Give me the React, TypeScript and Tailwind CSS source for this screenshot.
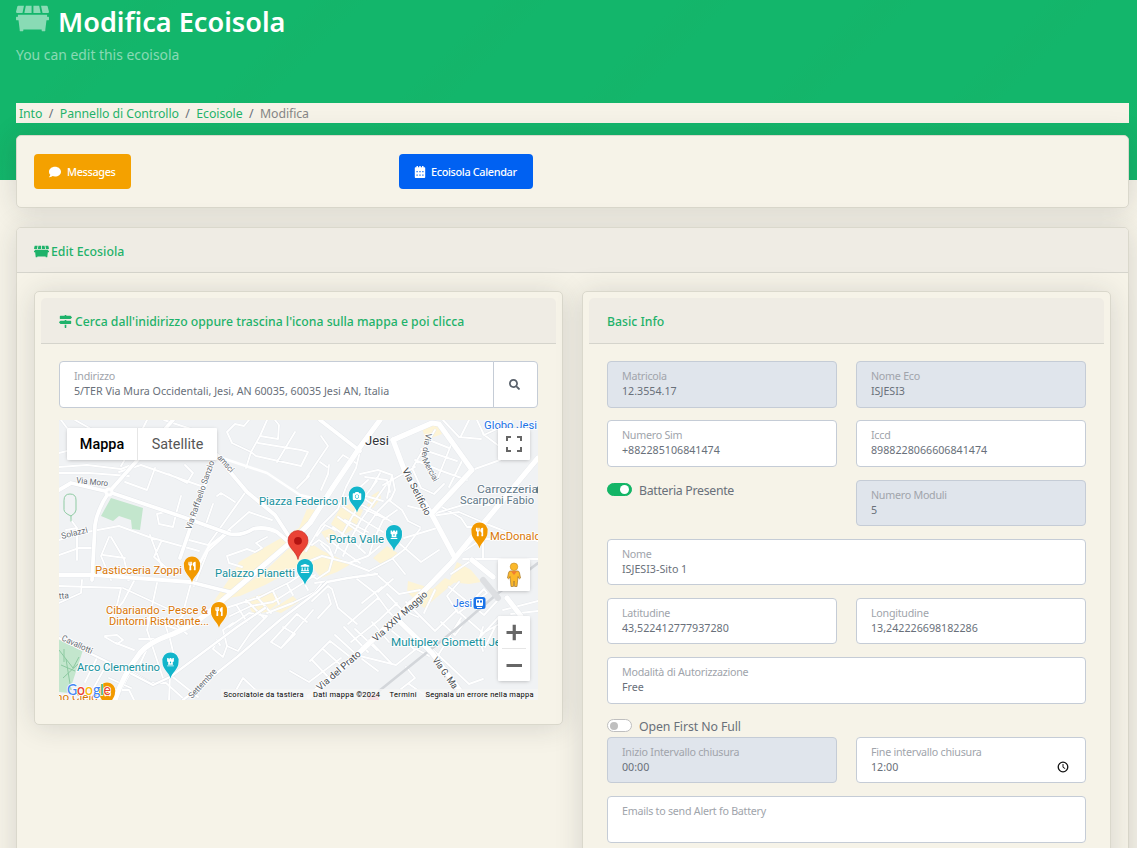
import { ReactNode } from "react";
import { FaDumpster, FaMapSigns, FaComment, FaSearch, FaUtensils, FaCamera, FaChessRook, FaLandmark } from "react-icons/fa";

const shadow = "shadow-[0_2px_28px_0_rgba(33,40,50,0.15)]";

function Field({ label, value, disabled, className = "", children }: { label: string; value?: string; disabled?: boolean; className?: string; children?: ReactNode }) {
  return (
    <div className={`flex items-center justify-between rounded-[4px] border border-[#c5ccd6] pl-[14px] pr-4 ${disabled ? "bg-[#e0e5ec]" : "bg-white"} ${className}`}>
      <div className="flex h-full flex-col pt-[7px]">
        <span className="h-[15px] whitespace-nowrap text-[10.7px] leading-[15px] tracking-[-0.25px] text-[#a0a4ab]">{label}</span>
        <span className="h-[15px] whitespace-nowrap text-[10.7px] leading-[15px] text-[#69707a]">{value}</span>
      </div>
      {children}
    </div>
  );
}

function Switch({ on, label, className }: { on?: boolean; label: string; className: string }) {
  return (
    <div className="flex items-start gap-[7px]">
      <span className={`mt-[2px] flex h-[13px] w-[25px] items-center rounded-full border px-[2px] ${on ? "justify-end border-[#13b566] bg-[#13b566]" : "justify-start border-[#bfbfbf] bg-white"}`}>
        <span className={`rounded-full ${on ? "size-[9px] bg-white" : "size-[8px] bg-[#bfbfbf]"}`} />
      </span>
      <span className={`pt-px text-[12.3px] leading-[18px] text-[#69707a] ${className}`}>{label}</span>
    </div>
  );
}

function Panel({ title, icon, className = "", children }: { title: string; icon?: ReactNode; className?: string; children: ReactNode }) {
  return (
    <section className={`w-[529px] rounded-[5px] border border-[#dad8cc] bg-[#f6f3e8] p-[6px] ${shadow} ${className}`}>
      <h2 className="flex h-[46px] items-center gap-[3px] rounded-t-[5px] border-b border-[#d5d4cc] bg-[#efece4] pl-[18px] pt-px text-[12.22px] font-medium text-[#1fb26a]">
        {icon}
        <span className="pt-[2px]">{title}</span>
      </h2>
      <div className="px-[18px] pt-[17px]">{children}</div>
    </section>
  );
}

const minorRoads = [
  "M0 33L8 31M0 47L28 45L62 49L75 44M62 46L82 12L88 0M0 53L30 53L70 56",
  "M16 0L48 18M2 0L8 8M66 62L88 70L96 48M82 45L142 66M60 52L82 45M110 54L128 63L134 53L126 45",
  "M105 0L132 9M168 12L176 4L185 6L190 0M168 12L173 23L192 32L201 16L219 19L220 5L216 0M201 16L208 0M192 32L197 36L242 46L249 32L242 30L199 23M218 42L236 12M192 32L187 48",
  "M248 57L269 26L262 16M238 68L250 56M262 70L269 54L270 45M279 41L284 35L297 43M261 42L268 47",
  "M0 120L28 112L60 106L90 117L140 131M91 115L104 150M102 122L95 137L110 150M50 117L42 136L52 160M52 117L65 139L70 160M0 135L20 128L34 128M44 135L66 138M12 100L18 108L18 140M18 108L7 110",
  "M122 76L117 94L114 107L100 104L98 94L106 92M146 107L154 84M158 76L162 73L170 78L176 82M213 100L190 92L149 128M188 70L164 104L149 125M171 111L149 131L135 166M149 125L126 119M183 147L170 143L168 136L188 129L196 132L203 128L197 123L208 117",
  "M0 183L22 173L23 160M0 166L62 168L55 198M64 168L120 194M75 161L64 182L50 198M98 163L88 210L104 258M102 219L80 219M88 198L120 210M69 160L61 148M132 163L122 200M46 216L58 215L64 220L58 224L46 217M87 231L81 244L71 253L57 280M111 256L110 280M75 230L57 223M104 198L111 219L116 240M128 214L116 204L125 194",
  "M26 262L38 238M34 269L48 244M50 258L72 268M73 252L92 263L107 263L126 280M110 254L139 277M20 278L50 278M55 270L70 270L75 280M161 225L158 220L154 229L164 237L168 226M212 222L238 194M222 228L254 190M212 222L222 228L236 214L224 207M238 194L248 202",
  "M167 188L201 177L231 162L252 148M171 196L192 186L214 182L241 165L256 155M178 186L188 202M187 180L205 198M198 177L212 193M214 171L220 184M228 164L234 175M242 157L249 170M208 193L234 183L256 172L262 164M170 207L190 193L208 196L192 212L179 231L168 226L164 210L174 203",
  "M301 31L297 48L287 67L279 89L262 106L247 131M301 54L319 50L333 55L336 70L331 81L343 90L349 101L361 107M306 57L328 60L331 72M309 60L299 69L288 78M292 76L301 84L320 94L333 102M284 87L299 97L324 112M279 97L296 109L316 122M274 107L292 120L306 133M268 118L280 128L301 143M262 124L274 137L270 151L258 159L247 152M297 67L307 76L324 81M318 61L304 79L293 97L283 115L276 133M327 65L315 82L302 100L291 120L284 136M333 77L319 91L307 108L300 128M338 90L324 100L316 117L310 135M253 125L260 120L270 127L274 137M276 110L266 105L258 116M246 143L263 136L290 143L310 151M290 143L309 136L321 126M310 151L333 139L346 129L361 109M256 163L289 158L310 154M334 139L346 154M300 75L313 84M286 100L309 112M305 89L327 99M321 53L312 69M333 55L328 78",
  "M356 47L324 65M354 50L362 68L375 74L385 64M356 40L380 50L408 60M362 29L398 41M370 20L390 28M376 10L354 47M392 25L378 60M404 39L390 67M384 0L400 17L422 19M402 16L410 0M418 0L425 15L438 9L435 0M424 14L440 26L452 0M413 50L441 40L462 27M349 86L373 92",
  "M373 96L400 92L430 105L453 114L479 121M383 87L402 98L408 107L425 107M374 94L407 84L431 85M399 135L423 119L442 119M404 139L479 139M424 138L424 119M345 118L378 108M341 124L362 142L380 130",
  "M253 181L269 166L273 169L279 188L298 204M269 174L272 184L259 198M298 159L316 173L330 192L343 205M319 172L334 159M303 183L323 167M289 204L319 178M292 222L320 200L338 183M316 153L340 174L361 170M328 174L343 190L359 197M313 202L330 222M336 197L351 181M347 182L376 211L398 190M376 170L365 193M316 218L338 203M310 220L332 243M296 209L318 230",
  "M251 241L271 221L290 236M231 251L250 262L282 238M253 240L272 260M264 229L285 248M276 215L299 236M285 207L309 232M301 236L337 245L357 229L370 236M333 211L355 229M303 239L319 251M347 247L356 258L342 269M350 264L370 278M374 230L410 264L424 259M382 202L396 215L408 199M401 202L390 216L402 225M176 272L184 258L203 276",
  "M392 154L410 142M400 162L388 176L399 193L428 173L425 169L407 187M390 167L425 195L438 181M401 193L424 213L444 202M424 207L418 226M436 207L426 227M440 197L420 218L424 231M444 190L479 181M452 194L479 191M402 198L375 242",
];

const majorRoads = [
  "M0 70L12 63L50 72L124 97L171 114Q183 116 194 109Q206 106 218 112L231 123",
  "M114 0L74 45L50 72Q38 90 36 105L33 160",
  "M158 35L172 53L188 72L216 95L231 118",
  "M0 155L35 155L131 162L171 172",
  "M154 42L121 138",
  "M261 0L301 31",
];

const arterialRoads = [
  "M321 0L301 27L274 67L251 103L231 123L164 180Q140 203 114 214Q90 222 81 233Q64 255 56 280",
  "M334 20L346 52L373 95L396 138",
  "M413 140L434 157M448 178L462 196",
  "M334 20L373 3L380 4L413 50L373 93",
  "M479 38L423 105L393 142L366 170L303 230L250 277",
  "M336 197L373 233L408 280",
];

function Pin({ x, y, color, kind }: { x: number; y: number; color: string; kind: "food" | "camera" | "rook" | "museum" }) {
  const Icon = { food: FaUtensils, camera: FaCamera, rook: FaChessRook, museum: FaLandmark }[kind];
  return (
    <g transform={`translate(${x} ${y})`}>
      <path d="M0 15C-1 9-8 6-8-1A8.2 8.2 0 1 1 8-1C8 6 1 9 0 15Z" fill={color} stroke="#fff" strokeOpacity=".65" strokeWidth="1" paintOrder="stroke" />
      <Icon x="-4.5" y="-6" size={9} color="#fff" />
    </g>
  );
}

function MapText({ x, y, w, size = 11, fill = "#16929e", rotate = 0, children }: { x: number; y: number; w: number; size?: number; fill?: string; rotate?: number; children: string }) {
  return (
    <text transform={`translate(${x} ${y}) rotate(${rotate})`} textLength={w} lengthAdjust="spacingAndGlyphs" fontSize={size} fill={fill} stroke="#fff" strokeWidth="2" strokeOpacity=".85" strokeLinejoin="round" paintOrder="stroke">
      {children}
    </text>
  );
}

function MapView() {
  return (
    <svg viewBox="0 0 479 280" className="block h-[280px] w-[479px] overflow-hidden font-['Roboto',sans-serif]" fontFamily="Roboto, sans-serif">
      <rect width="479" height="280" fill="#f0f2f4" />
      <g fill="#fdf4d6">
        <path d="M248 89L240 108L215 122L180 142L175 152L155 181L165 184L232 125L256 100L260 90Z" />
        <path d="M240 122L228 130L205 152L189 163L170 178L181 176L206 165L230 152L248 140L262 158L278 152L292 144L262 130L250 122Z" />
        <path d="M187 180L214 170L222 181L208 192L194 194ZM212 190L234 176L240 182L222 193Z" />
        <path d="M281 88L291 84L304 90L296 108L283 116L272 104ZM312 76L320 71L322 78L314 88L308 86ZM262 112L272 108L280 118L270 124ZM328 126L340 134L322 144L314 138Z" />
        <path d="M362 6L378 2L383 14L367 20ZM349 161L374 169L386 158L396 162L365 188L348 172Z" />
        <path d="M398 142L412 150L422 162L410 164L390 162Z" />
      </g>
      <path d="M52 78L84 88L81 110L73 109L72 100L60 96L54 101L42 96Z" fill="#c3e6cd" />
      <path d="M0 219L24 230L10 273L0 272Z" fill="#c3e6cd" />
      <path d="M0 230L14 248L20 237M4 258L19 244M2 245L16 251M7 239L12 270M5 229L5 242" fill="none" stroke="#8cc9a0" />
      <g fill="none" strokeLinejoin="round" strokeLinecap="round">
        <g stroke="#e2e5e9" strokeWidth="2.600">{minorRoads.map((d) => <path key={d} d={d} />)}</g>
        <g stroke="#fff" strokeWidth="1.900">{minorRoads.map((d) => <path key={d} d={d} />)}</g>
        <path d="M0 218L71 253L94 265L111 257L178 207L206 188M124 280L178 237L192 225L221 200L258 172L268 162L289 158L318 154" stroke="#dfe2e7" strokeWidth="3.200" />
        <path d="M0 218L71 253L94 265L111 257L178 207L206 188M124 280L178 237L192 225L221 200L258 172L268 162L289 158L318 154" stroke="#fff" strokeWidth="2.400" />
        <path d="M160 37L208 53L241 75L262 80M131 162L150 126L171 111" stroke="#fff" strokeWidth="2.600" />
        <path d="M320 271L402 205L438 174L479 143" stroke="#d3d6da" strokeWidth="2.600" />
        <path d="M424 160L439 178" stroke="#dddfe2" strokeWidth="6" />
        <g stroke="#e2e5e9" strokeWidth="4.600">{majorRoads.map((d) => <path key={d} d={d} />)}</g>
        <g stroke="#e2e5e9" strokeWidth="5.800">{arterialRoads.map((d) => <path key={d} d={d} />)}</g>
        <g stroke="#fff" strokeWidth="3.800">{majorRoads.map((d) => <path key={d} d={d} />)}</g>
        <g stroke="#fff" strokeWidth="5.200">{arterialRoads.map((d) => <path key={d} d={d} />)}</g>
        <circle cx="50" cy="72" r="3" fill="#f0f2f4" stroke="#fff" strokeWidth="3" />
        <path d="M5 80Q5 74 11 74Q17 74 17 80V90Q17 93 12 96Q5 93 5 90Z" stroke="#8fcba3" />
        <path d="M12 96L12 101" stroke="#8fcba3" />
      </g>
      <circle cx="314" cy="280" r="6" fill="#f7a1b5" />

      <MapText x={17} y={63} w={32} size={8.5} fill="#666c73" rotate={6}>Via Moro</MapText>
      <MapText x={3} y={119} w={27} size={8.5} fill="#666c73" rotate={-14}>Solazzi</MapText>
      <MapText x={132} y={110} w={72} size={8.5} fill="#666c73" rotate={-71}>Via Raffaello Sanzio</MapText>
      <MapText x={158} y={38} w={20} size={8.5} fill="#666c73" rotate={48}>amsci</MapText>
      <MapText x={0} y={179} w={10} size={8.5} fill="#666c73" rotate={-5}>tta</MapText>
      <MapText x={2} y={220} w={33} size={8.5} fill="#666c73" rotate={25}>Cavallotti</MapText>
      <MapText x={133} y={279} w={37} size={8.5} fill="#666c73" rotate={-47}>Settembre</MapText>
      <MapText x={343} y={50} w={52} size={9.5} fill="#4b4f54" rotate={63}>Via Setificio</MapText>
      <MapText x={367} y={13} w={25} size={8.5} fill="#666c73" rotate={100}>Via dei</MapText>
      <MapText x={363} y={40} w={25} size={8.5} fill="#666c73" rotate={62}>Merciai</MapText>
      <MapText x={317} y={222} w={70} size={9.5} fill="#4b4f54" rotate={-42}>Via XXIV Maggio</MapText>
      <MapText x={261} y={271} w={55} size={9.5} fill="#4b4f54" rotate={-41}>Via del Prato</MapText>
      <MapText x={373} y={240} w={43} size={9.5} fill="#4b4f54" rotate={54}>Via G. Ma...</MapText>

      <MapText x={306} y={25} w={24} size={13} fill="#33363a">Jesi</MapText>
      <MapText x={425} y={9} w={53} fill="#1a73e8">Globo Jesi</MapText>
      <MapText x={418} y={73} w={61} size={10.5} fill="#607887">Carrozzeria</MapText>
      <MapText x={401} y={84} w={74} size={10.5} fill="#607887">Scarponi Fabio</MapText>
      <circle cx="481" cy="70" r="4" fill="#607887" />
      <MapText x={200} y={85} w={88}>Piazza Federico II</MapText>
      <MapText x={270} y={123} w={55}>Porta Valle</MapText>
      <MapText x={156} y={157} w={80}>Palazzo Pianetti</MapText>
      <MapText x={18} y={251} w={83}>Arco Clementino</MapText>
      <MapText x={332} y={226} w={110}>Multiplex Giometti Je</MapText>
      <MapText x={394} y={187} w={19} fill="#1a73e8">Jesi</MapText>
      <MapText x={36} y={154} w={87} fill="#d97706">Pasticceria Zoppi</MapText>
      <MapText x={47} y={194} w={102} fill="#d97706">Cibariando - Pesce &amp;</MapText>
      <MapText x={50} y={205} w={100} fill="#d97706">Dintorni Ristorante...</MapText>
      <MapText x={431} y={120} w={58} fill="#d97706">McDonald's</MapText>
      <MapText x={-3} y={281} w={42} fill="#d97706">no Cielo</MapText>

      <Pin x={298} y={77.5} color="#12b5cb" kind="camera" />
      <Pin x={335} y={116} color="#12b5cb" kind="rook" />
      <Pin x={246} y={150} color="#12b5cb" kind="museum" />
      <Pin x={111.5} y={243.5} color="#12b5cb" kind="rook" />
      <Pin x={133} y={147.5} color="#f29900" kind="food" />
      <Pin x={160} y={193} color="#f29900" kind="food" />
      <Pin x={420.5} y={113.5} color="#f29900" kind="food" />
      <Pin x={48} y={273.5} color="#f29900" kind="food" />
      <rect x="414.500" y="177" width="12" height="12" rx="2.500" fill="#1a73e8" />
      <rect x="417" y="179" width="7" height="7" rx="1" fill="#fff" />
      <path d="M418 180.500H420V182.500H418ZM421 180.500H423V182.500H421Z" fill="#1a73e8" />
      <path d="M418 187.500H423" stroke="#fff" />

      <path d="M239 139.500C237 131 229 128 229 120.500A10 10 0 1 1 249 120.500C249 128 241 131 239 139.500Z" fill="#ea4335" stroke="#c5221f" strokeWidth=".6" />
      <circle cx="239" cy="120.800" r="3.900" fill="#b31412" />

      <text x="8" y="274.500" textLength="44" lengthAdjust="spacingAndGlyphs" fontSize="16" fontFamily="Lato, sans-serif" fontWeight="500" stroke="#fff" strokeWidth="1.500" paintOrder="stroke">
        <tspan fill="#4285f4">G</tspan><tspan fill="#ea4335">o</tspan><tspan fill="#fbbc05">o</tspan><tspan fill="#4285f4">g</tspan><tspan fill="#34a853">l</tspan><tspan fill="#ea4335">e</tspan>
      </text>

      <rect x="162" y="269" width="317" height="11" fill="#f5f5f5" fillOpacity=".75" />
      <g fontSize="7.500" fill="#000">
        <text x="164.500" y="277" textLength="80">Scorciatoie da tastiera</text>
        <text x="254" y="277" textLength="67">Dati mappa ©2024</text>
        <text x="330.500" y="277" textLength="27">Termini</text>
        <text x="366.500" y="277" textLength="108">Segnala un errore nella mappa</text>
      </g>
    </svg>
  );
}

const control = "absolute bg-white shadow-[0_1px_4px_-1px_rgba(0,0,0,0.3)]";

function MapBox() {
  return (
    <div className="relative mt-[12px] h-[280px] w-[479px] overflow-hidden">
      <MapView />
      <div className={`${control} left-[8px] top-[8px] flex h-[32px] w-[150px] items-center rounded-[1px] font-['Roboto',sans-serif] text-[14.4px]`}>
        <span className="flex h-full w-[71px] items-center justify-center border-r border-[#e6e6e6] pt-px font-medium text-black">Mappa</span>
        <span className="flex-1 pt-px text-center text-[#565656]">Satellite</span>
      </div>
      <div className={`${control} left-[439px] top-[8px] flex size-[32px] items-center justify-center rounded-[1px]`}>
        <svg viewBox="0 0 16 16" className="size-[16px]" fill="none" stroke="#666" strokeWidth="2">
          <path d="M1 5V1H5M11 1H15V5M15 11V15H11M5 15H1V11" />
        </svg>
      </div>
      <div className={`${control} left-[439px] top-[139px] flex size-[32px] items-center justify-center rounded-[1px]`}>
        <svg viewBox="0 0 16 26" className="h-[26px] w-[16px]">
          <path d="M4 9H12Q13 9 13.500 11L14.500 16Q13.500 17.500 12.500 16L12 14.500L11 24.500H8.600L8 19L7.400 24.500H5L4 14.500L3.500 16Q2.500 17.500 1.500 16L2.500 11Q3 9 4 9Z" fill="#fbb829" stroke="#a8772a" strokeWidth=".7" />
          <circle cx="8" cy="4.800" r="3.800" fill="#fbb829" stroke="#c38a24" strokeWidth=".6" />
          <path d="M5 9.300L8 13L11 9.300Z" fill="#ef7d33" />
        </svg>
      </div>
      <div className={`${control} left-[439px] top-[196px] flex h-[65px] w-[32px] flex-col items-center rounded-[1px]`}>
        <svg viewBox="0 0 32 65" className="h-[65px] w-[32px]" fill="none">
          <path d="M8.500 16.500H24M16.250 8.750V24.250M8.500 49.500H24" stroke="#666" strokeWidth="3.200" />
          <path d="M4 32.500H28" stroke="#e6e6e6" />
        </svg>
      </div>
    </div>
  );
}

export default function App() {
  return (
    <div className="h-[848px] overflow-hidden bg-[#f6f3e8] bg-[repeating-linear-gradient(135deg,#13b66b_0px,#13b66b_90px,#14b56a_110px,#13b66b_130px)] bg-[length:100%_180px] bg-no-repeat pl-4 pr-2 font-['Noto_Sans',sans-serif]">
      <header className="h-[103px]">
        <h1 className="flex h-[44px] items-center gap-[9px] text-[27.1px] font-semibold text-white">
          <FaDumpster className="-mt-[7px] size-[33px] text-white/50" />
          <span className="pt-px">Modifica Ecoisola</span>
        </h1>
        <p className="text-[13.9px] leading-[22px] text-white/50">You can edit this ecoisola</p>
      </header>
      <nav className="flex h-[20px] items-center gap-[6.5px] bg-[#f6f3e8] pl-[3px] pt-[2px] text-[12.3px] tracking-[-0.08px] text-[#1fb26a]">
        <span>Into</span>
        <span className="text-[#69707a]">/</span>
        <span>Pannello di Controllo</span>
        <span className="text-[#69707a]">/</span>
        <span>Ecoisole</span>
        <span className="text-[#69707a]">/</span>
        <span className="text-[#858585]">Modifica</span>
      </nav>

      <section className={`mt-[12px] flex h-[73px] items-center rounded-[5px] border border-[#dad8cc] bg-[#f6f3e8] px-[17px] text-[10.9px] font-medium tracking-[-0.35px] text-white ${shadow}`}>
        <div className="w-[365px]">
          <button className="flex h-[35px] w-[97px] items-center gap-[6px] rounded-[4px] bg-[#f4a100] pl-[15px]">
            <FaComment className="size-[12px]" />
            <span className="pt-px">Messages</span>
          </button>
        </div>
        <button className="flex h-[35px] w-[134px] items-center gap-[5px] whitespace-nowrap rounded-[4px] bg-[#0061f2] pl-[15px]">
          <svg viewBox="0 0 12 12" className="size-[12px]">
            <path fill="currentColor" fillRule="evenodd" d="M2.500 0H4V1.200H5.250V0H6.750V1.200H8V0H9.500V1.200H10.500Q11.200 1.200 11.200 2V11Q11.200 12 10.400 12H1.600Q.8 12 .8 11V2Q.8 1.200 1.500 1.200H2.500ZM2.500 5V6.200H3.700V5ZM5.400 5V6.200H6.600V5ZM8.300 5V6.200H9.500V5ZM2.500 8.500V9.700H3.700V8.500ZM5.400 8.500V9.700H6.600V8.500ZM8.300 8.500V9.700H9.500V8.500Z" />
          </svg>
          <span className="pt-px">Ecoisola Calendar</span>
        </button>
      </section>

      <main className={`mt-[19px] h-[700px] rounded-[5px] border border-[#dad8cc] bg-[#f6f3e8] ${shadow}`}>
        <h2 className="flex h-[45px] items-center gap-[2px] rounded-t-[4px] border-b border-[#d5d4cc] bg-[#efece4] pl-[17px] pt-[2px] text-[12.3px] font-medium text-[#1fb26a]">
          <FaDumpster className="size-[15px]" />
          <span className="pt-[2px]">Edit Ecosiola</span>
        </h2>
        <div className="flex items-start gap-[19px] px-[17px] pt-[18px]">
          <Panel className="h-[434px]" icon={<FaMapSigns className="size-[13px]" />} title="Cerca dall'inidirizzo oppure trascina l'icona sulla mappa e poi clicca">
            <div className="flex">
              <Field className="h-[47px] w-[435px] rounded-r-none" label="Indirizzo" value="5/TER Via Mura Occidentali, Jesi, AN 60035, 60035 Jesi AN, Italia" />
              <div className="-ml-px flex h-[47px] w-[45px] items-center justify-center rounded-r-[4px] border border-[#c5ccd6] bg-white pr-[3px]">
                <FaSearch className="size-[11px] text-[#59616b]" />
              </div>
            </div>
            <MapBox />
          </Panel>

          <Panel className="h-[640px]" title="Basic Info">
            <div className="grid grid-cols-2 gap-x-[19px]">
              <Field disabled className="mb-[12px] h-[47px]" label="Matricola" value="12.3554.17" />
              <Field disabled className="mb-[12px] h-[47px]" label="Nome Eco" value="ISJESI3" />
              <Field className="mb-[13px] h-[47px]" label="Numero Sim" value="+882285106841474" />
              <Field className="mb-[13px] h-[47px]" label="Iccd" value="8988228066606841474" />
              <div className="pt-[1px]">
                <Switch on label="Batteria Presente" className="tracking-[-0.3px]" />
              </div>
              <Field disabled className="mb-[13px] h-[46px]" label="Numero Moduli" value="5" />
              <Field className="col-span-2 mb-[13px] h-[46px]" label="Nome" value="ISJESI3-Sito 1" />
              <Field className="mb-[13px] h-[46px]" label="Latitudine" value="43,522412777937280" />
              <Field className="mb-[13px] h-[46px]" label="Longitudine" value="13,242226698182286" />
              <Field className="col-span-2 h-[47px]" label="Modalità di Autorizzazione" value="Free" />
              <div className="col-span-2 h-[33px] pt-[13px]">
                <Switch label="Open First No Full" className="tracking-[-0.08px]" />
              </div>
              <Field disabled className="mb-[13px] h-[46px]" label="Inizio Intervallo chiusura" value="00:00" />
              <Field className="mb-[13px] h-[46px]" label="Fine intervallo chiusura" value="12:00">
                <svg viewBox="0 0 12 12" className="mt-[14px] size-[12px]" fill="none" stroke="#111" strokeWidth="1.300">
                  <circle cx="6" cy="6" r="4.800" />
                  <path d="M6 3V6.300L8.200 7.600" strokeWidth="1" />
                </svg>
              </Field>
              <Field className="col-span-2 h-[47px]" label="Emails to send Alert fo Battery" />
            </div>
          </Panel>
        </div>
      </main>
    </div>
  );
}
